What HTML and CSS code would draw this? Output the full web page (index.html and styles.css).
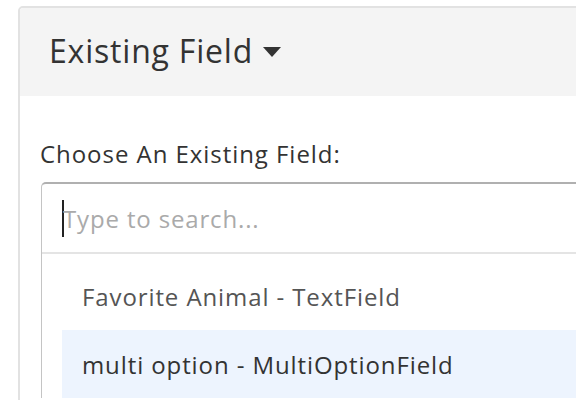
FILE: index.html
```html
<!DOCTYPE html>
<html>
<head>
<meta charset="utf-8">
<link rel="stylesheet" href="styles.css">
</head>
<body>
<div class="panel">
  <div class="panel-header">
    <span class="title">Existing Field</span>
    <svg class="caret" width="18" height="10" viewBox="0 0 18 10"><path d="M0 0 L18 0 L9 10 Z" fill="#333"/></svg>
  </div>
  <div class="panel-body">
    <label class="label">Choose An Existing Field:</label>
    <div class="select-box">
      <div class="search">
        <span class="cursor"></span><span class="placeholder">Type to search...</span>
      </div>
      <ul class="options">
        <li class="option">Favorite Animal - TextField</li>
        <li class="option active">multi option - MultiOptionField</li>
      </ul>
    </div>
  </div>
</div>
</body>
</html>
```
FILE: styles.css
```css
html, body {
  margin: 0;
  padding: 0;
  background: #fff;
  font-family: "Open Sans", "Noto Sans", sans-serif;
  color: #333;
  overflow: hidden;
}
.panel {
  margin: 6px 0 0 18px;
  width: 700px;
  border: 2px solid #e2e2e2;
  border-radius: 5px;
  overflow: hidden;
}
.panel-header {
  background: #f4f4f4;
  height: 88px;
  box-sizing: border-box;
  padding: 0 0 4px 29px;
  display: flex;
  align-items: center;
  gap: 10px;
}
.title {
  font-size: 32px;
  letter-spacing: 0.8px;
  color: #333;
}
.caret {
  margin-top: 4px;
}
.panel-body {
  padding: 42px 20px 60px 20px;
}
.label {
  display: block;
  font-size: 24px;
  letter-spacing: 0.95px;
  line-height: 32px;
  color: #333;
  margin-bottom: 12px;
}
.select-box {
  margin-left: 1px;
  border-top: 2px solid #b0b0b0;
  border-left: 1px solid #c4c4c4;
  border-radius: 5px 0 0 0;
}
.search {
  height: 68px;
  display: flex;
  align-items: center;
  padding-left: 20px;
  border-bottom: 2px solid #e4e4e4;
}
.cursor {
  display: inline-block;
  width: 2px;
  height: 37px;
  background: #222;
  margin-right: -1px;
}
.placeholder {
  font-size: 24px;
  letter-spacing: 0.85px;
  color: #aaa;
}
.options {
  list-style: none;
  margin: 0;
  padding: 8px 0 0 20px;
}
.option {
  height: 68px;
  display: flex;
  align-items: center;
  padding-left: 20px;
  font-size: 24px;
  letter-spacing: 0.9px;
  color: #555;
}
.option.active {
  background: #edf4fe;
  color: #333;
}
```
